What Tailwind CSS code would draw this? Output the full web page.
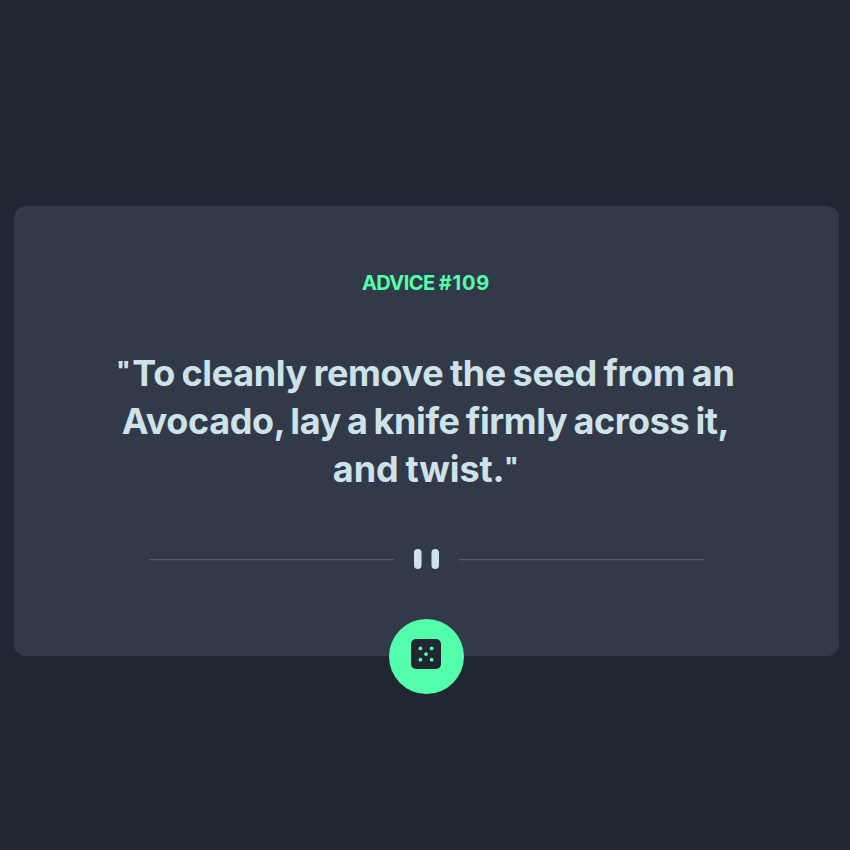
<!DOCTYPE html>
<html lang="en">
<head>
<meta charset="utf-8">
<title>Advice Generator</title>
<script src="https://cdn.jsdelivr.net/npm/@tailwindcss/browser@4"></script>
</head>
<body class="h-screen overflow-hidden bg-[#202632] pt-[206px] pl-[14px] font-['Inter',sans-serif]">
<main class="flex h-[450px] w-[825px] flex-col items-center rounded-xl bg-[#323a49]">
  <h1 class="mt-[62px] h-[30px] pr-px text-[20px] leading-[30px] font-bold tracking-[-0.55px] text-[#53ffaa]">ADVICE <span class="tracking-[0.8px]">#109</span></h1>
  <p class="mt-[51px] flex flex-col items-center pr-0.5 text-[36px] leading-[48px] font-bold whitespace-nowrap text-[#cee3e9]">
    <span class="h-12 tracking-[-0.36px] [word-spacing:-1.5px]"><span class="align-[9px] text-[22px] leading-none font-black tracking-[2px]">"</span>To cleanly remove the seed from an</span>
    <span class="h-12 tracking-[-0.4px] [word-spacing:-2px]">Avocado, lay a knife firmly across it,</span>
    <span class="h-12 tracking-[-0.1px] [word-spacing:-1.5px]">and twist.<span class="align-[9px] text-[22px] leading-none font-black">"</span></span>
  </p>
  <svg class="mt-14 h-5 w-[555px] shrink-0" viewBox="0 0 444 16" fill="none">
    <path fill="#4f5d74" d="M0 8h196v1H0zM248 8h196v1H248z"/>
    <g fill="#cee3e9"><rect x="212" width="6" height="16" rx="3"/><rect x="226" width="6" height="16" rx="3"/></g>
  </svg>
  <button class="mt-[50px] flex size-[75px] shrink-0 justify-center rounded-full bg-[#53ffaa] pt-5 pr-px" aria-label="New advice">
    <svg class="size-[30px]" viewBox="0 0 24 24">
      <rect width="24" height="24" rx="4" fill="#202733"/>
      <g fill="#53ffaa"><circle cx="7.5" cy="7.5" r="1.5"/><circle cx="16.5" cy="7.5" r="1.5"/><circle cx="12" cy="12" r="1.5"/><circle cx="7.5" cy="16.5" r="1.5"/><circle cx="16.5" cy="16.5" r="1.5"/></g>
    </svg>
  </button>
</main>
</body>
</html>
